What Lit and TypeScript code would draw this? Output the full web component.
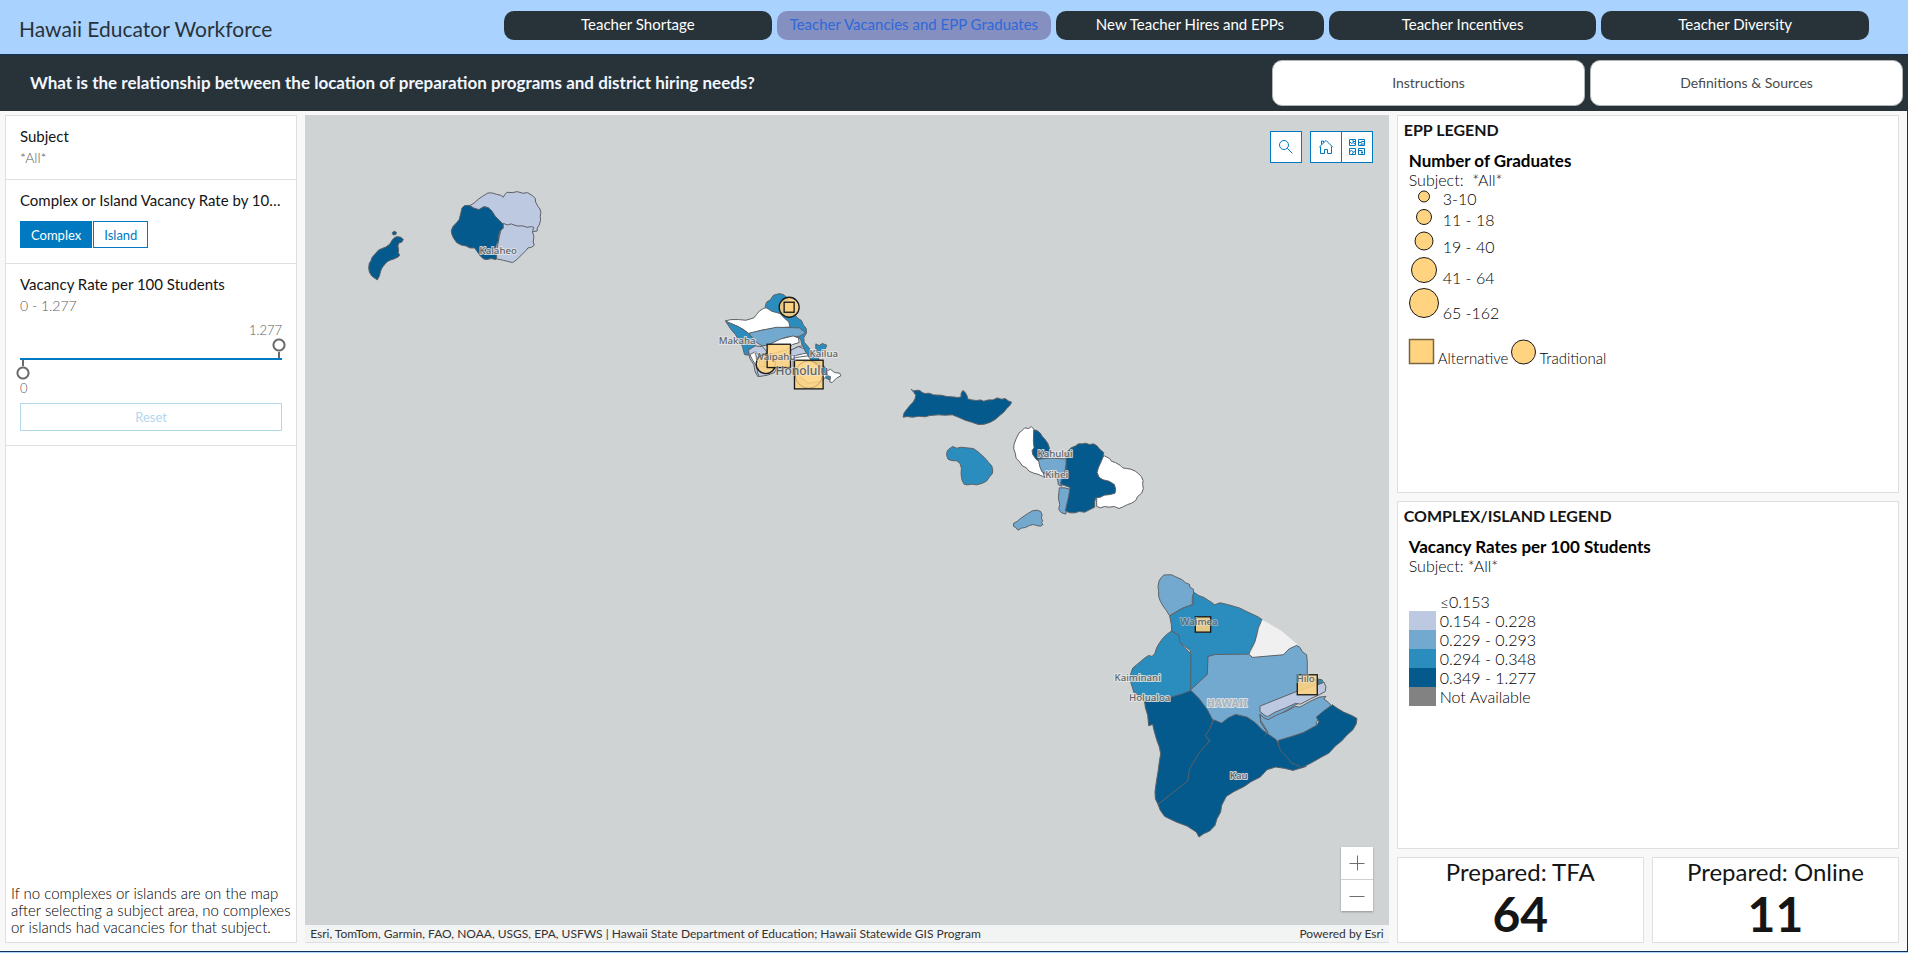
import { LitElement, html, svg, css } from "lit";
import { customElement, property, state } from "lit/decorators.js";
import { classMap } from "lit/directives/class-map.js";

type Region = { tone: string; d: string };
type Place = { x: number; y: number; name: string; kind?: string };
type Marker = { shape: "circle" | "square"; x: number; y: number; r: number; faint?: boolean };
type Sheet = { origin: [number, number]; regions: Region[]; places: Place[]; markers: Marker[] };

/* Every sheet is drawn at three units to the pixel and placed by its origin. */
const SHEETS: Sheet[] = [
  {
    origin: [350, 180],
    regions: [
      { tone: "t5", d: "M128 155l5-3 6 3-1 7-8 1-3-4z" },
      { tone: "t5", d: "M134 171l8-3 11 2 7 7-4 7-10 4-2 9 2 10-1 9 4 8-4 5-13 6-12 4-9 5-8 9-7 9-4 10-4 15-6 11-6-4-11-8-7-12-2-13 2-13 5-8 3-9 11-13 9-10 12-5 10-4 12-9 6-11z" },
      { tone: "t2", d: "M360 75l14-9 11-10 13-9 16-10 13 0 12 4 14 3 7 6 5-9 6-6 16 1 15-3 17 5 14-2 14 9 9 8 1 11 7 13 6 8 3 10-2 12 1 12-4 14-6 9 0 9-12 2-14 2-12-4-18 0-17-6-12 3-12-5-12 0-12-8-12-16-12-18-16-17-20 5z" },
      { tone: "t2", d: "M460 128l12 5 12-3 17 6 18 0 12 4 14-2 6 2-3 14 4 14-2 16 3 10-8 6-11 2-6 8-12 12-18 17-10 7-16-4-12-3-20-4 0-20 3-20 4-22 6-24z" },
      { tone: "t5", d: "M336 82l8-7 14-1 12 8 17 5 15-9 13 3 11 10 10 16 12 12 12 12 0 12-10 8-4 16 0 12-7 14-4 20 5 16-2 8-14-3-15 3-8-2-10-9-10-14-7-10-14 0-12-6-15-3-13-7-9-13-5-11-2-12 5-12 12-13 7-9 4-16z" },
    ],
    places: [{ x: 445, y: 220, name: "Kalaheo" }],
    markers: [],
  },
  {
    origin: [710, 280],
    regions: [
      { tone: "t1", d: "M46 121l18-4 22 0 22 2 24-7 8-10 9-11 13-8 14-3 30 8 18 6 14 18 6 27-44 3-50 8-30 12-20-16-34-16z" },
      { tone: "t4", d: "M166 79l4-14 12-8 9-13 18-5 14 4 12 12 8 18 6 22 14 17 12 8 6 14 8 9 1 14-8 14 1 14 9 10 11 14 16 14 9 14 4 14 14 9 6 8 10 22 2 10-17-8-16-18-26-20-14-24-12-28-6-24-12-14-18-12-6-28-14-12-12-13-25-7z" },
      { tone: "t3", d: "M117 158l34-8 50-10 68 2 19 15-19 10-40 3-24 10-22 12-26 4-22-14z" },
      { tone: "t4", d: "M48 123l38 15 30 20 20 24 0 16-18 8-2 18-12-2-6-24-10-16-11-20-14-16z" },
      { tone: "t1", d: "M182 190l28-14 40-10 16 6 2 14-20 6-20 16-34 10-30 6z" },
      { tone: "t2", d: "M116 208l20-12 22 2 12 14-4 22-2 28-4 22-16 4-8-14-4-22-12-18z" },
      { tone: "t1", d: "M120 222l16-8 16 14-4 24 8 30-12-8-6-20-10-16z" },
      { tone: "t2", d: "M150 256l50 10-6 10-22 8-24 4-6-14z" },
      { tone: "t1", d: "M240 212l24-14 14-2 14 24 14 24-4 14-30-8-30-18z" },
      { tone: "t2", d: "M244 208l22-10 16 6 8 14-12 2-26 6-12-6z" },
      { tone: "t1", d: "M250 232l44-6 18 22 26 18 12 20-14 16-40 6-26-20-20-30z" },
      { tone: "t4", d: "M318 190l10 5 10-6 13 5-5 12-12 6-2 12-12-8-2-14z" },
      { tone: "t1", d: "M350 272l12-6 12 10 16 2 3 8-12 6-14 14-7-2 2-16-8-2z" },
    ],
    places: [
      { x: 82, y: 190, name: "Makaha" },
      { x: 196, y: 239, name: "Waipahu", kind: "over" },
      { x: 342, y: 229, name: "Kailua" },
      { x: 276, y: 284, name: "Honolulu", kind: "city" },
    ],
    markers: [
      { shape: "circle", x: 238, y: 80, r: 30 },
      { shape: "square", x: 238, y: 80, r: 15 },
      { shape: "circle", x: 168, y: 250, r: 29 },
      { shape: "square", x: 207, y: 226, r: 35 },
      { shape: "square", x: 297, y: 282, r: 43 },
      { shape: "circle", x: 297, y: 282, r: 41, faint: true },
    ],
  },
  {
    origin: [890, 370],
    regions: [
      { tone: "t5", d: "M64 56l7 5 12-2 8 1 6 6 9 3 12-1 14 5 22 1 18 4 18 1 14 2 10-2 0-10 5-9 7 5 6 11 2 9 12 3 14 2 12-2 10 4 14-4 14 0 12-6 14 4 10-2 10 7 10 4-6 10-10 10-8 10-12 10-14 12-14 8-18 6-18 1-20-7-20-6-18-8-20-8-22 1-20-1-26 2-14 4-18-2-20 3-16-2-12 2 3-13 9-12 8-10 10-10 6-11 2-10-6-9z" },
      { tone: "t4", d: "M171 248l2-8 8-7 8-5 12 5 14-3 16 2 20 2 14 10 18 16 14 16 9 10 3 12-1 11-10 12-8 11-14 7-16 4-14-2-14 2-9-2-6-12-3-18 1-18-4-14-10-8-16-1-10-4-4-10z" },
      { tone: "t1", d: "M434 178l-9-10-8 6-12-2-9 9-8 6-8 16-7 18-1 14 5 14 2 14 9 9 10 14 12 6 8 10 14 6 12 3 14 6 7 4-6-18-4-22-5-8-10-6 0-14 2-18-6-16z" },
      { tone: "t5", d: "M432 178l10 2 10 8 6 10 9 10 8 12 4 12 2 12-4 16-10 6-20 4-8-4-10-14-2-12 6-8-2-20z" },
      { tone: "t3", d: "M446 266l20-2 24-1 34 2 20-2-6 16-10 6-2 16-6 20-4 26-10-4-2-14-6-14-14-2-14-2-14-8-6-16z" },
      { tone: "t1", d: "M644 256l8 4 8 4 5 8 12 4 14 8 8 8 12 2 12 2 14 6 10 8 8 8 5 12-1 12 2 12-5 14-12 10-6 12-12 8-12 4-16 8-10 4-14-6-16 2-14-2-11 4-12-4 0-140z" },
      { tone: "t3", d: "M509 352l16 0 18 5-5 20-4 22-3 22-3 10-14-5-7-10 3-14-4-20z" },
      { tone: "t5", d: "M530 246l14-14 14-6 8-6 12 0 10-2 12 4 12-2 10 6 8 10 12 10-2 14-6 14-8 18-4 14 6 14 12 8 18 4 16 10 4 14-2 12-14 4-18 2-12 6-14 2-3 12 0 16-16 8-14 7-16-2-14 4-14 0-14-6 4-18 6-26 4-26-16-6-12-4 2-14 12-12 2-24 0-12z" },
      { tone: "t3", d: "M372 458l10-5 8-7 14-10 12-8 12-7 14-2 11 4 4 10-2 10 4 8-4 5 5 6-8 5-12-2-9-3-12 3-12 6-12 2-10 6-7-8-7-4z" },
    ],
    places: [
      { x: 496, y: 259, name: "Kahului" },
      { x: 501, y: 321, name: "Kihei" },
    ],
    markers: [],
  },
  {
    origin: [1100, 560],
    regions: [
      { tone: "t4", d: "M216 212l-1-20-5-26 16-8 20-14 34-12 0-38 5 3 12 8 16 6 12 8 10 6 10 8 16-6 18 4 22 6 20 6 24 12 30 14 13 9-12 24-10 42-15 28L447 283 325 288 323 342 273 390 272 270 240 245 238 225z" },
      { tone: "t3", d: "M210 166l-10-16-10-14-8-14-5-14 0-14-2-16 3-16 6-10 8-8 12-1 12 0 12 6 18 8 12 10 12 5 0 8 11 6 1 10-4 16 0 20-32 12-20 12z" },
      { tone: "t4", d: "M215 212l-14 10-12 12-10 14-8 14-6 18-8 8-10-3-12 8-12 10-12 10-12 10-6 18-2 18 6 18 6 20 16 8 14 20 14 10 24-4 30-2 32-8 28-12 12-10 1-118L240 245 238 225z" },
      { tone: "none", d: "M488 178l56 32 50 42-20 18-28 14-48 4-34 4-14-10 14-26 10-30 6-26z" },
      { tone: "t3", d: "M273 388l50-46 2-54 22-6 100-1 12 10 44-4 48-4 18-18 22-10 10 6 8 14 12 8 2 20 0 46 12 10 24 0 10 10 0 20-12 10-22 8-40 22-88 54-16 62-16 2-16-12-24-22-24-14-34-8-30 14-20 16-26-12-30-38z" },
      { tone: "t3", d: "M481 462l12 10 12 6 26-14 30-12 26-14 14 2 28-16 30-14 20-2-6 8 14 10 8 10-2 10-14 12-14 10-8 8-8 12 8 12-2 8-20 12-20 12-28 10-22 6-22 6-18 2-8-12-16-8-6-8 10-12-12-20-10-16z" },
      { tone: "t2", d: "M481 437l20-8 40-16 40-16 40-14 30-10 22-8 6 14-2 14-18 10-26 12-30 16-16-2-30 14-30 12-24 14-10-6-12-10z" },
      { tone: "t4", d: "M655 356l12 2 4 8-14 6z" },
      { tone: "t5", d: "M134 414l50-2 30-2 34-10 26-10 24 24 24 32 18 34-10 28-12 18 12 16-28 34-24 40-9 46L175 732 167 715 166 694 170 664 175 634 179 604 183 580 179 560 171 538 163 510 159 492 147 496 144 464 137 442z" },
      { tone: "t5", d: "M342 478l24 10 20-16 22-10 34 8 24 16 24 24 20 14 20 14 8 14 10 18 24 20 48 28-40 12-24-6-28-4-26 8-20 22-28 14-20 14-32 16L380 708 366 735 363 755 352 775 346 795 330 812 312 820 298 830 290 815 262 797 230 785 195 768 182 750 175 732 264 662 270 625 300 575 331 541 317 526 330 505z" },
      { tone: "t5", d: "M536 540l40-12 36-12 40-22 6-10-8-14 24-20 24-17 14 10 20 12 24 10 16 9-2 16-10 18-18 16-16 18-18 14-20 22-26 14-28 16-28 14-18-10-12-4-18-22-14-14-8-18z" },
      { tone: "line", d: "M481 460l2 26 14 22 8 8-10 10" },
    ],
    places: [
      { x: 298, y: 193, name: "Waimea", kind: "over" },
      { x: 114, y: 361, name: "Kaiminani" },
      { x: 150, y: 421, name: "Holualoa" },
      { x: 382, y: 439, name: "HAWAII", kind: "island" },
      { x: 417, y: 655, name: "Kau" },
      { x: 618, y: 366, name: "Hilo", kind: "over" },
    ],
    markers: [
      { shape: "square", x: 310, y: 192, r: 23 },
      { shape: "square", x: 623, y: 373, r: 30 },
    ],
  },
];

@customElement("island-map")
class IslandMap extends LitElement {
  static styles = css`
    :host {
      display: flex;
      flex-direction: column;
      position: relative;
      min-width: 0;
      background: #cfd3d4;
      font-family: Lato, sans-serif;
    }
    .canvas {
      flex: 1;
      width: 100%;
      min-height: 0;
      display: block;
      height: 100px;
    }
    .region {
      stroke: #5b6066;
      stroke-width: 3;
      stroke-linejoin: round;
    }
    .t1 { fill: #ffffff; }
    .t2 { fill: #bdc9e1; }
    .t3 { fill: #74a9cf; }
    .t4 { fill: #2b8cbe; }
    .t5 { fill: #045a8d; }
    .none { fill: #f0f0f0; stroke: none; }
    .line { fill: none; }
    .marker {
      fill: #ffd37f;
      fill-opacity: 0.88;
      stroke: #1a1a1a;
      stroke-width: 4;
    }
    .faint {
      fill: none;
      stroke-opacity: 0.25;
      stroke-width: 3;
    }
    .place {
      font: 500 29px "Noto Sans", sans-serif;
      text-anchor: middle;
      fill: #5f6468;
      stroke: #e6e8e8;
      stroke-opacity: 0.85;
      stroke-width: 6;
      stroke-linejoin: round;
      paint-order: stroke;
    }
    .over { stroke-opacity: 0.45; }
    .city { font-size: 36px; stroke-opacity: 0.5; }
    .island {
      font-size: 32px;
      font-weight: 700;
      fill: #a9b4bc;
    }
    .tools {
      position: absolute;
      top: 16px;
      right: 16px;
      display: flex;
      gap: 8px;
    }
    .group { display: flex; }
    .tool {
      width: 32px;
      height: 32px;
      padding: 0;
      display: grid;
      place-items: center;
      background: #fff;
      border: 1px solid #0079c1;
      color: #0079c1;
    }
    .group .tool + .tool { border-left: 0; width: 31px; }
    .zoom {
      position: absolute;
      right: 16px;
      bottom: 32px;
      width: 32px;
      box-shadow: 0 1px 2px rgba(0, 0, 0, 0.3);
    }
    .step {
      display: grid;
      place-items: center;
      width: 32px;
      height: 32px;
      padding: 0;
      border: 0;
      background: #fff;
      color: #6e6e6e;
    }
    .step + .step { border-top: 1px solid #d0d0d0; }
    .credits {
      display: flex;
      justify-content: space-between;
      padding: 0 5px;
      font-size: 12px;
      line-height: 17px;
      color: #323232;
      background: #f2f3f3;
      border-bottom: 1px solid #dfdfdf;
    }
  `;

  private marker(m: Marker) {
    const cls = classMap({ marker: true, faint: !!m.faint });
    return m.shape === "circle"
      ? svg`<circle class=${cls} cx=${m.x} cy=${m.y} r=${m.r}></circle>`
      : svg`<rect class=${cls} x=${m.x - m.r} y=${m.y - m.r} width=${2 * m.r} height=${2 * m.r}></rect>`;
  }

  private sheet(s: Sheet) {
    return svg`<g transform="translate(${s.origin[0]} ${s.origin[1]}) scale(0.33333)">
      ${s.regions.map((r) => svg`<path class="region ${r.tone}" d=${r.d}></path>`)}
      ${s.markers.map((m) => this.marker(m))}
      ${s.places.map((p) => svg`<text class="place ${p.kind ?? ""}" x=${p.x} y=${p.y}>${p.name}</text>`)}
    </g>`;
  }

  render() {
    return html`
      <svg class="canvas" viewBox="305 115 1084 809" preserveAspectRatio="xMidYMid meet" role="img" aria-label="Hawaii vacancy rates">
        ${SHEETS.map((s) => this.sheet(s))}
      </svg>
      <div class="tools">
        <button class="tool" aria-label="Search">
          <svg width="16" height="16" viewBox="0 0 16 16" fill="none" stroke="currentColor">
            <circle cx="6" cy="6" r="4.5"></circle><path d="M9.3 9.3l5 5"></path>
          </svg>
        </button>
        <div class="group">
          <button class="tool" aria-label="Home">
            <svg width="16" height="16" viewBox="0 0 16 16" fill="none" stroke="currentColor">
              <path d="M1.2 8.2L8 1.4l6.8 6.8M2.5 7.5v7h4v-4h3v4h4v-7M3.5 5.6V2h2v1.6"></path>
            </svg>
          </button>
          <button class="tool" aria-label="Basemaps">
            <svg width="18" height="18" viewBox="0 0 18 18" fill="none" stroke="currentColor">
              <path d="M1.500 1.500h6v6h-6zM10.500 1.500h6v6h-6zM1.500 10.500h6v6h-6zM10.500 10.500h6v6h-6z"></path>
              <path d="M1.500 3.500l2 2 1.500-1 2.500 2M5 1.500v2h2.500M10.500 4.500h3v-1h3M13 7.500v-1.500h3.500M1.500 13.500l2-1 2 1.500 2-.5M4 16.500l1.500-2.500M10.500 12.500h3.500v4M13 14.500h2"></path>
            </svg>
          </button>
        </div>
      </div>
      <div class="zoom">
        <button class="step" aria-label="Zoom in">
          <svg width="16" height="16" viewBox="0 0 16 16" stroke="currentColor"><path d="M.5 8.500h15M8.500.5v15"></path></svg>
        </button>
        <button class="step" aria-label="Zoom out">
          <svg width="16" height="16" viewBox="0 0 16 16" stroke="currentColor"><path d="M.5 8.500h15"></path></svg>
        </button>
      </div>
      <div class="credits">
        <span>Esri, TomTom, Garmin, FAO, NOAA, USGS, EPA, USFWS | Hawaii State Department of Education; Hawaii Statewide GIS Program</span>
        <span>Powered by Esri</span>
      </div>
    `;
  }
}

@customElement("filter-panel")
class FilterPanel extends LitElement {
  @state() low = 0;
  @state() high = 1277;
  @state() level = "Complex";

  static styles = css`
    :host {
      display: flex;
      flex-direction: column;
      box-sizing: border-box;
      min-width: 0;
      background: #fff;
      border: 1px solid #dfdfdf;
      color: #151515;
      font: 14px/20px Lato, sans-serif;
    }
    .block {
      padding: 10px 14px 11px;
      border-bottom: 1px solid #dfdfdf;
    }
    .name {
      margin: 0 0 2px;
      font-size: 15px;
      font-weight: 400;
      line-height: 20px;
      white-space: nowrap;
      overflow: hidden;
      text-overflow: ellipsis;
    }
    .value { color: #5a5a5a; font-weight: 300; }
    .choices { display: flex; gap: 1px; margin: 11px 0 4px; }
    .choice {
      height: 27px;
      padding: 0 10px;
      border: 1px solid #0079c1;
      background: #fff;
      color: #0079c1;
      font: 13px Lato, sans-serif;
    }
    .on { background: #0079c1; color: #fff; }
    .slider { margin-top: 6px; color: #5a5a5a; font-size: 13px; line-height: 16px; font-weight: 300; }
    .top { text-align: right; }
    .rail { height: 2px; background: #0079c1; }
    .range {
      appearance: none;
      display: block;
      width: calc(100% + 8px);
      height: 20px;
      margin: 0 -4px;
      background: none;
    }
    .range::-webkit-slider-thumb {
      appearance: none;
      width: 14px;
      height: 20px;
      border: 0;
    }
    .upper::-webkit-slider-thumb {
      background: radial-gradient(circle at 7px 7px, #fff 4px, #6a6a6a 5px, #6a6a6a 6px, transparent 7px),
        linear-gradient(#6a6a6a, #6a6a6a) 6px 14px / 2px 6px no-repeat;
    }
    .lower::-webkit-slider-thumb {
      background: radial-gradient(circle at 7px 13px, #fff 4px, #6a6a6a 5px, #6a6a6a 6px, transparent 7px),
        linear-gradient(#6a6a6a, #6a6a6a) 6px 0 / 2px 6px no-repeat;
    }
    .reset {
      width: 100%;
      height: 28px;
      margin: 7px 0 3px;
      border: 1px solid #b3d7ed;
      background: #fff;
      color: #b3d7ed;
      font: 13px Lato, sans-serif;
    }
    .note {
      margin: auto 0 6px 5px;
      font-size: 15px;
      line-height: 17px;
      font-weight: 300;
      color: #000;
    }
  `;

  private fmt(v: number) {
    return String(v / 1000);
  }

  render() {
    return html`
      <section class="block">
        <h2 class="name">Subject</h2>
        <div class="value">*All*</div>
      </section>
      <section class="block">
        <h2 class="name">Complex or Island Vacancy Rate by 100 Students</h2>
        <div class="choices">
          ${["Complex", "Island"].map(
            (l) => html`<button class=${classMap({ choice: true, on: this.level === l })} @click=${() => (this.level = l)}>${l}</button>`
          )}
        </div>
      </section>
      <section class="block">
        <h2 class="name">Vacancy Rate per 100 Students</h2>
        <div class="value">${this.fmt(this.low)} - ${this.fmt(this.high)}</div>
        <div class="slider">
          <div class="top">${this.fmt(this.high)}</div>
          <input class="range upper" type="range" aria-label="Maximum rate" min="0" max="1277" .value=${String(this.high)}
            @input=${(e: Event) => (this.high = Number((e.target as HTMLInputElement).value))} />
          <div class="rail"></div>
          <input class="range lower" type="range" aria-label="Minimum rate" min="0" max="1277" .value=${String(this.low)}
            @input=${(e: Event) => (this.low = Number((e.target as HTMLInputElement).value))} />
          <div>${this.fmt(this.low)}</div>
        </div>
        <button class="reset">Reset</button>
      </section>
      <p class="note">If no complexes or islands are on the map after selecting a subject area, no complexes or islands had vacancies for that subject.</p>
    `;
  }
}

@customElement("map-legends")
class MapLegends extends LitElement {
  static styles = css`
    :host {
      display: grid;
      grid-template-rows: 378fr 348fr 86px;
      grid-template-columns: 1fr 1fr;
      gap: 8px;
      min-width: 0;
      color: #151515;
      font: 16px/19px Lato, sans-serif;
    }
    .card {
      box-sizing: border-box;
      background: #fff;
      border: 1px solid #dfdfdf;
      min-height: 0;
    }
    .wide { grid-column: 1 / -1; }
    .title {
      margin: 0;
      padding: 4px 6px 12px;
      font-size: 16px;
      font-weight: 700;
      line-height: 19px;
    }
    .body { padding-left: 11px; font-weight: 300; color: #000; }
    .strong { font-size: 17px; font-weight: 700; }
    .row { display: flex; gap: 4px; align-items: end; }
    .dot {
      display: grid;
      place-items: center;
      width: 30px;
      padding-bottom: 5px;
    }
    .size { padding-bottom: 1px; }
    .shape { fill: #ffd37f; stroke: #1a1a1a; overflow: visible; display: block; }
    .kinds { display: flex; align-items: end; gap: 3px; margin-top: 16px; font-size: 15px; line-height: 14px; }
    .ramp { margin-top: 17px; }
    .swatch { width: 27px; height: 19px; }
    .t1 { background: #ffffff; }
    .t2 { background: #bdc9e1; }
    .t3 { background: #74a9cf; }
    .t4 { background: #2b8cbe; }
    .t5 { background: #045a8d; }
    .na { background: #828282; }
    .stat { text-align: center; }
    .caption { font-size: 24px; line-height: 28px; margin: 0; font-weight: 400; }
    .figure { font-size: 48px; line-height: 56px; font-weight: 700; }
  `;

  render() {
    const sizes: [string, number, number][] = [
      ["3-10", 15, 5.5],
      ["11 - 18", 16, 7.5],
      ["19 - 40", 22, 9],
      ["41 - 64", 26, 12.5],
      ["65 -162", 30, 14.5],
    ];
    const ramp = [
      ["t1", "≤0.153"],
      ["t2", "0.154 - 0.228"],
      ["t3", "0.229 - 0.293"],
      ["t4", "0.294 - 0.348"],
      ["t5", "0.349 - 1.277"],
      ["na", "Not Available"],
    ];
    return html`
      <section class="card wide">
        <h2 class="title">EPP LEGEND</h2>
        <div class="body">
          <div class="strong">Number of Graduates</div>
          <div>Subject: &nbsp;*All*</div>
          ${sizes.map(
            ([text, h, r]) => html`<div class="row">
              <span class="dot"><svg class="shape" width="30" height=${h}><circle cx="15" cy=${h / 2} r=${r}></circle></svg></span>
              <span class="size">${text}</span>
            </div>`
          )}
          <div class="kinds">
            <svg class="shape" width="26" height="26"><rect x="0.5" y="0.5" width="24" height="24" stroke="#7a6540" stroke-width="1.5"></rect></svg>
            <span>Alternative</span>
            <svg class="shape" width="25" height="26"><circle cx="12.5" cy="13" r="12"></circle></svg>
            <span>Traditional</span>
          </div>
        </div>
      </section>
      <section class="card wide">
        <h2 class="title">COMPLEX/ISLAND LEGEND</h2>
        <div class="body">
          <div class="strong">Vacancy Rates per 100 Students</div>
          <div>Subject: *All*</div>
          <div class="ramp">
            ${ramp.map(([tone, text]) => html`<div class="row"><span class="swatch ${tone}"></span><span>${text}</span></div>`)}
          </div>
        </div>
      </section>
      <section class="card stat">
        <h3 class="caption">Prepared: TFA</h3>
        <div class="figure">64</div>
      </section>
      <section class="card stat">
        <h3 class="caption">Prepared: Online</h3>
        <div class="figure">11</div>
      </section>
    `;
  }
}

@customElement("app-root")
class AppRoot extends LitElement {
  @property() current = "Teacher Vacancies and EPP Graduates";

  static styles = css`
    :host {
      box-sizing: border-box;
      display: flex;
      flex-direction: column;
      min-height: 100vh;
      background: #f8f8f8;
      border-bottom: 1px solid #aad2ff;
      font-family: Lato, sans-serif;
    }
    .banner {
      display: flex;
      align-items: start;
      height: 54px;
      background: #aad2ff;
      padding: 0 39px 0 19px;
      border-bottom: 1px solid #10315c;
    }
    .brand {
      margin: 0;
      flex: 0 0 485px;
      font-size: 21px;
      font-weight: 400;
      line-height: 58px;
      color: #283339;
    }
    .nav { flex: 1; display: flex; gap: 5px; padding-top: 11px; }
    .tab {
      flex: 1 1 0;
      min-width: max-content;
      box-sizing: border-box;
      height: 29px;
      padding: 0 13px;
      border-radius: 10px;
      background: #283339;
      color: #fff;
      font-size: 15px;
      line-height: 27px;
      text-align: center;
      text-decoration: none;
    }
    .current { background: #8590c0; color: #2f68d8; }
    .question {
      display: flex;
      align-items: center;
      gap: 5px;
      height: 56px;
      padding: 0 5px 0 30px;
      background: #283339;
    }
    .ask { flex: 1; margin: 0; font-size: 17px; line-height: 24px; font-weight: 700; color: #f2f6ff; }
    .info {
      box-sizing: border-box;
      width: 313px;
      height: 46px;
      padding: 0 0 2px;
      border: 1px solid #b0b5b8;
      border-radius: 10px;
      background: #fff;
      color: #4a4a4a;
      font: 14px Lato, sans-serif;
    }
    .board {
      flex: 1;
      display: grid;
      grid-template-columns: minmax(0, 292fr) minmax(0, 1083fr) minmax(0, 502fr);
      gap: 8px;
      padding: 4px 8px 8px 5px;
      border-right: 1px solid #10315c;
      border-bottom: 1px solid #10315c;
    }
  `;

  render() {
    const tabs = [
      "Teacher Shortage",
      "Teacher Vacancies and EPP Graduates",
      "New Teacher Hires and EPPs",
      "Teacher Incentives",
      "Teacher Diversity",
    ];
    return html`
      <header class="banner">
        <h1 class="brand">Hawaii Educator Workforce</h1>
        <nav class="nav">
          ${tabs.map((t) => html`<a class=${classMap({ tab: true, current: t === this.current })} href="#">${t}</a>`)}
        </nav>
      </header>
      <div class="question">
        <h2 class="ask">What is the relationship between the location of preparation programs and district hiring needs?</h2>
        <button class="info">Instructions</button>
        <button class="info">Definitions &amp; Sources</button>
      </div>
      <main class="board">
        <filter-panel></filter-panel>
        <island-map></island-map>
        <map-legends></map-legends>
      </main>
    `;
  }
}
